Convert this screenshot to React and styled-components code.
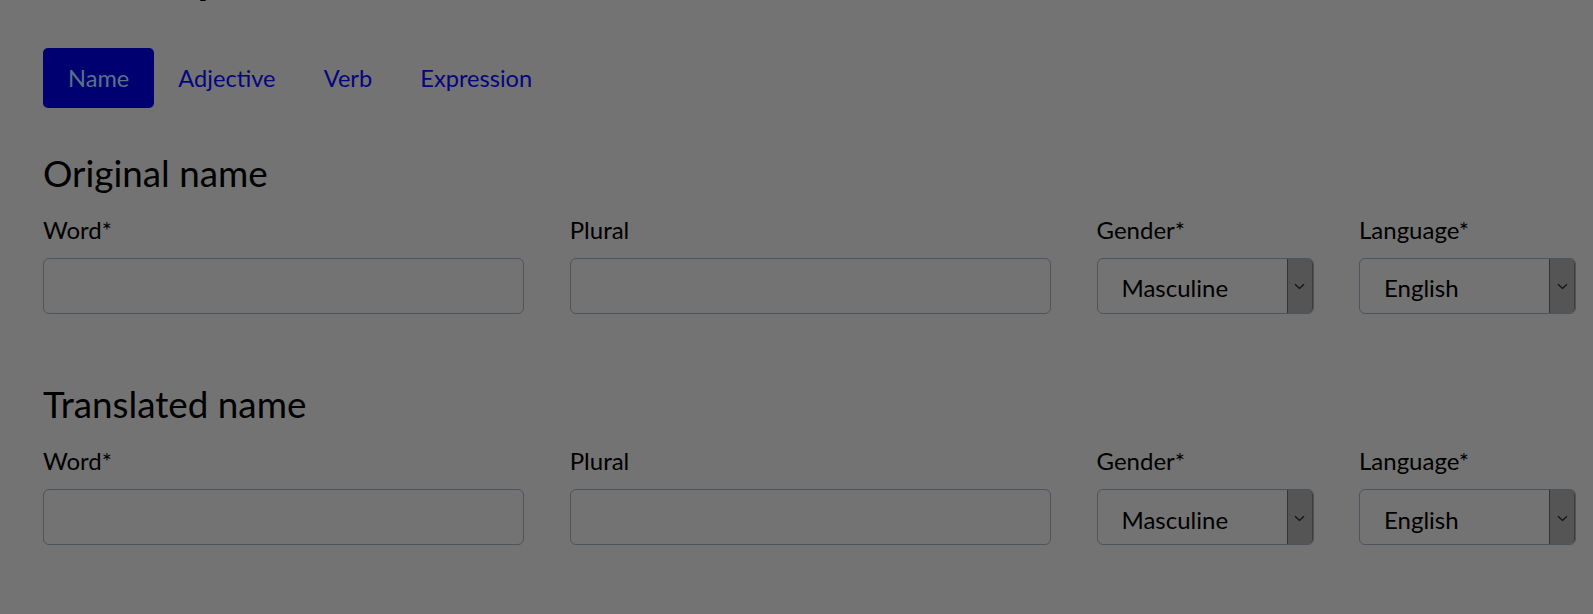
import React from "react";
import styled, { createGlobalStyle } from "styled-components";

const GlobalStyle = createGlobalStyle`
  html, body {
    margin: 0;
    padding: 0;
    background: #737373;
    overflow: hidden;
  }
  body {
    font-family: Lato, "Open Sans", Arial, sans-serif;
    color: #000;
  }
  * { box-sizing: border-box; }
`;

const Page = styled.main`
  padding: 0 17px 0 43px;
  min-height: 100vh;
`;

const Title = styled.h1`
  margin: -49px 0 0;
  font-size: 43.5px;
  line-height: 53px;
  font-weight: 700;
  color: #000;
  white-space: nowrap;
`;

const Tabs = styled.nav`
  display: flex;
  align-items: center;
  margin-top: 44px;
`;

const Tab = styled.button`
  height: 60px;
  padding: 0 ${(p) => (p.$active ? 25 : 24.1)}px;
  border: 0;
  border-radius: 5px;
  font-family: inherit;
  font-size: 23.6px;
  line-height: 28.8px;
  cursor: pointer;
  background: ${(p) => (p.$active ? "#000070" : "transparent")};
  color: ${(p) => (p.$active ? "#587289" : "#05057d")};
`;

const Section = styled.section`
  margin-top: ${(p) => p.$gap}px;
`;

const SectionTitle = styled.h2`
  margin: 0;
  padding-top: 0.5px;
  font-size: 36.8px;
  line-height: 45px;
  font-weight: 400;
  color: #000;
`;

const FieldGrid = styled.div`
  display: grid;
  grid-template-columns: 1fr 1fr 217px 217px;
  column-gap: 45.5px;
  margin-top: 20px;
`;

const Field = styled.div`
  display: flex;
  flex-direction: column;
  min-width: 0;
`;

const Label = styled.label`
  display: block;
  font-size: 24px;
  line-height: 28px;
  margin-bottom: 14px;
  color: #000;
`;

const TextInput = styled.input`
  height: 56px;
  width: 100%;
  border: 1px solid #4e545b;
  border-radius: 6px;
  background: #737373;
  font-family: inherit;
  font-size: 24px;
  padding: 0 24px;
  outline: none;
`;

const SelectWrap = styled.div`
  display: flex;
  height: 56px;
  border: 1px solid #4e545b;
  border-radius: 6px;
  background: #737373;
  overflow: hidden;
`;

const NativeSelect = styled.select`
  flex: 1;
  min-width: 0;
  appearance: none;
  -webkit-appearance: none;
  border: 0;
  background: transparent;
  font-family: inherit;
  font-size: 24px;
  line-height: 28.8px;
  color: #000;
  padding: 6px 0 0 24px;
  outline: none;
`;

const ArrowBox = styled.span`
  flex: 0 0 26px;
  display: flex;
  align-items: center;
  justify-content: center;
  padding-top: 2px;
  background: #555555;
  border-left: 1px solid #343434;
  border-right: 1px solid #3c3c3c;
  border-radius: 0 5px 5px 0;
`;

const Chevron = () => (
  <svg width="11" height="7" viewBox="0 0 11 7" aria-hidden="true">
    <path d="M1 1.2 L5.5 5.5 L10 1.2" fill="none" stroke="#111" strokeWidth="1.2" />
  </svg>
);

const Select = ({ options }) => (
  <SelectWrap>
    <NativeSelect defaultValue={options[0]}>
      {options.map((o) => (
        <option key={o}>{o}</option>
      ))}
    </NativeSelect>
    <ArrowBox>
      <Chevron />
    </ArrowBox>
  </SelectWrap>
);

const NameSection = ({ title, gap }) => (
  <Section $gap={gap}>
    <SectionTitle>{title}</SectionTitle>
    <FieldGrid>
      <Field>
        <Label>Word*</Label>
        <TextInput type="text" />
      </Field>
      <Field>
        <Label>Plural</Label>
        <TextInput type="text" />
      </Field>
      <Field>
        <Label>Gender*</Label>
        <Select options={["Masculine", "Feminine", "Neuter"]} />
      </Field>
      <Field>
        <Label>Language*</Label>
        <Select options={["English", "French", "German", "Spanish"]} />
      </Field>
    </FieldGrid>
  </Section>
);

export default function App() {
  return (
    <>
      <GlobalStyle />
      <Page>
        <Title>Word input</Title>
        <Tabs>
          <Tab $active>Name</Tab>
          <Tab>Adjective</Tab>
          <Tab>Verb</Tab>
          <Tab>Expression</Tab>
        </Tabs>
        <NameSection title="Original name" gap={42} />
        <NameSection title="Translated name" gap={68} />
      </Page>
    </>
  );
}
